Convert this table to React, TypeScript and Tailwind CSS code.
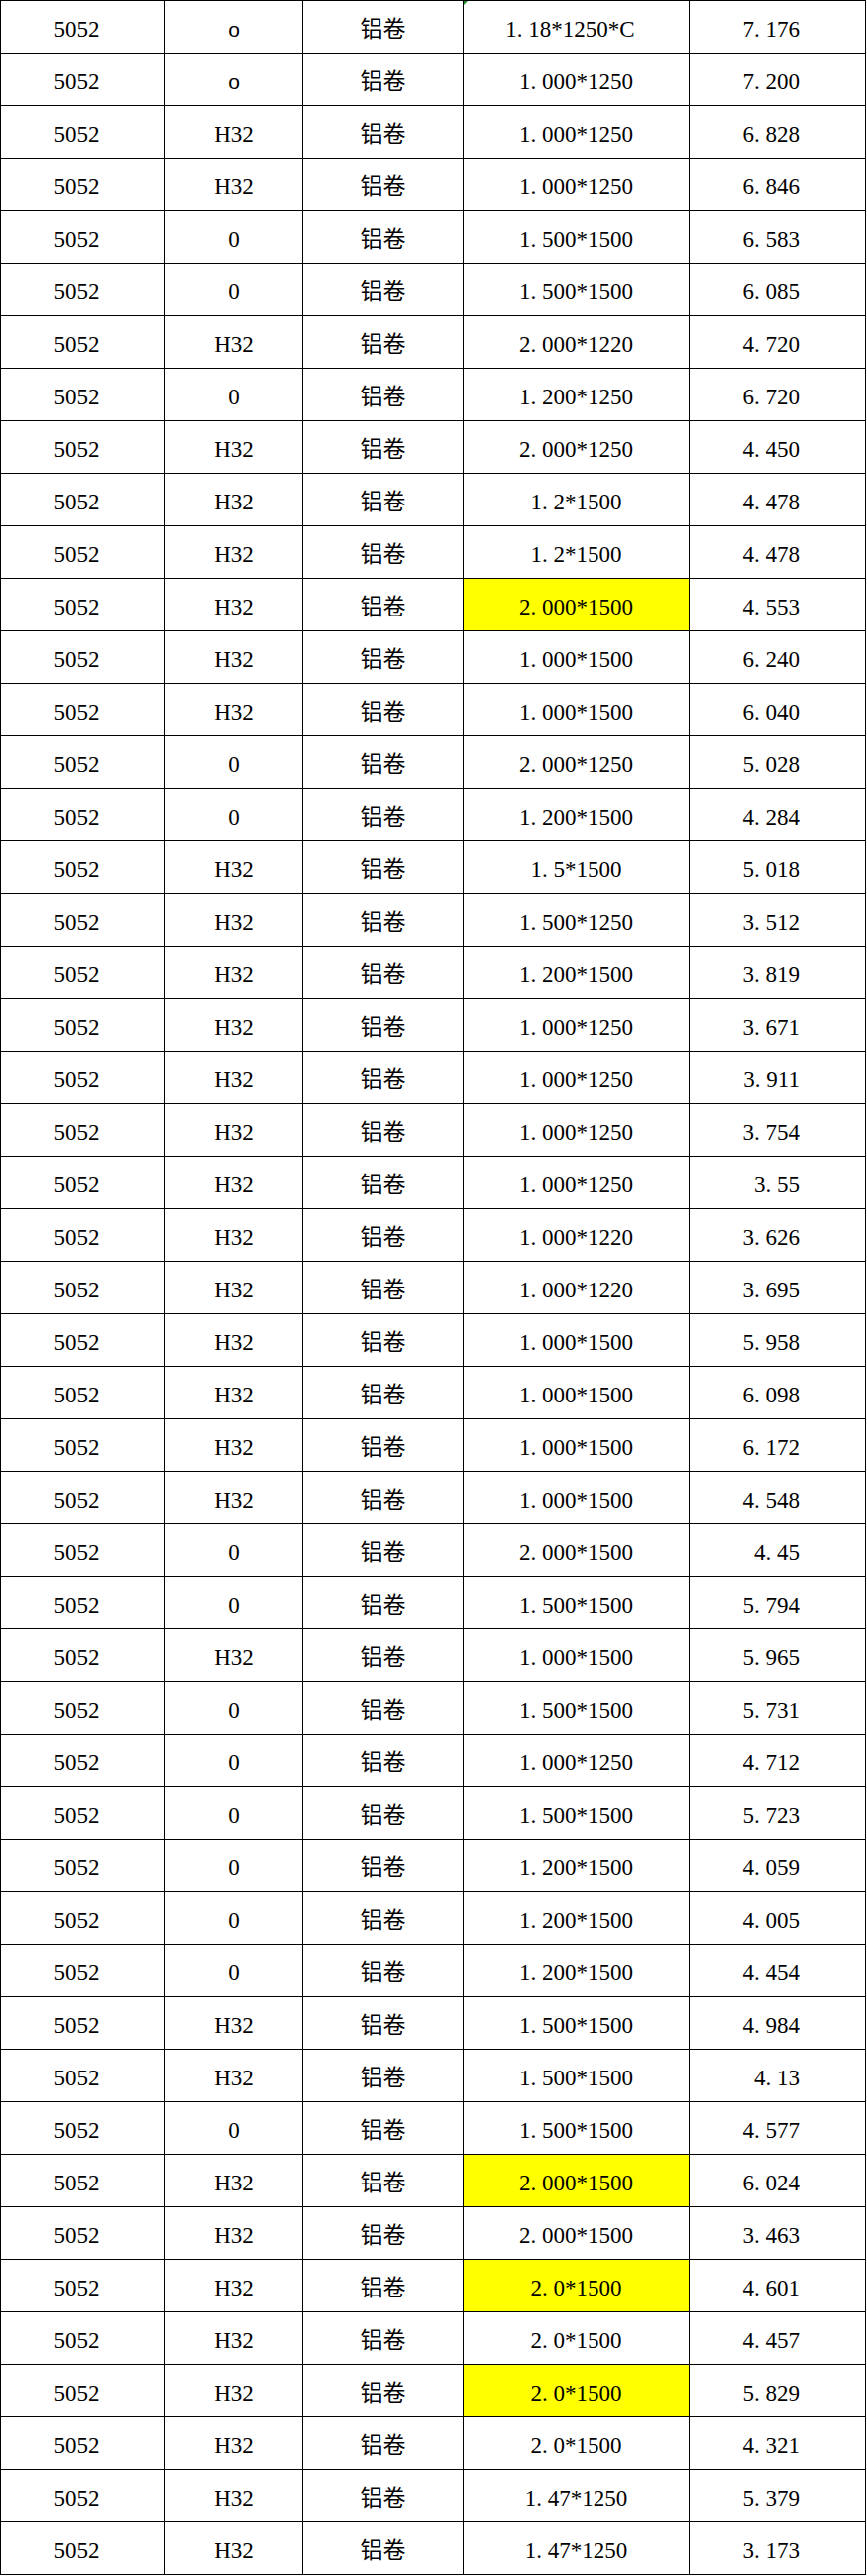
import React from "react";

type Row = {
  grade: string;
  temper: string;
  spec: string;
  weight: string;
  mark?: boolean;
};

const rows: Row[] = [
  { grade: "5052", temper: "o", spec: "1.18*1250*C", weight: "7.176" },
  { grade: "5052", temper: "o", spec: "1.000*1250", weight: "7.200" },
  { grade: "5052", temper: "H32", spec: "1.000*1250", weight: "6.828" },
  { grade: "5052", temper: "H32", spec: "1.000*1250", weight: "6.846" },
  { grade: "5052", temper: "0", spec: "1.500*1500", weight: "6.583" },
  { grade: "5052", temper: "0", spec: "1.500*1500", weight: "6.085" },
  { grade: "5052", temper: "H32", spec: "2.000*1220", weight: "4.720" },
  { grade: "5052", temper: "0", spec: "1.200*1250", weight: "6.720" },
  { grade: "5052", temper: "H32", spec: "2.000*1250", weight: "4.450" },
  { grade: "5052", temper: "H32", spec: "1.2*1500", weight: "4.478" },
  { grade: "5052", temper: "H32", spec: "1.2*1500", weight: "4.478" },
  { grade: "5052", temper: "H32", spec: "2.000*1500", weight: "4.553", mark: true },
  { grade: "5052", temper: "H32", spec: "1.000*1500", weight: "6.240" },
  { grade: "5052", temper: "H32", spec: "1.000*1500", weight: "6.040" },
  { grade: "5052", temper: "0", spec: "2.000*1250", weight: "5.028" },
  { grade: "5052", temper: "0", spec: "1.200*1500", weight: "4.284" },
  { grade: "5052", temper: "H32", spec: "1.5*1500", weight: "5.018" },
  { grade: "5052", temper: "H32", spec: "1.500*1250", weight: "3.512" },
  { grade: "5052", temper: "H32", spec: "1.200*1500", weight: "3.819" },
  { grade: "5052", temper: "H32", spec: "1.000*1250", weight: "3.671" },
  { grade: "5052", temper: "H32", spec: "1.000*1250", weight: "3.911" },
  { grade: "5052", temper: "H32", spec: "1.000*1250", weight: "3.754" },
  { grade: "5052", temper: "H32", spec: "1.000*1250", weight: "3.55" },
  { grade: "5052", temper: "H32", spec: "1.000*1220", weight: "3.626" },
  { grade: "5052", temper: "H32", spec: "1.000*1220", weight: "3.695" },
  { grade: "5052", temper: "H32", spec: "1.000*1500", weight: "5.958" },
  { grade: "5052", temper: "H32", spec: "1.000*1500", weight: "6.098" },
  { grade: "5052", temper: "H32", spec: "1.000*1500", weight: "6.172" },
  { grade: "5052", temper: "H32", spec: "1.000*1500", weight: "4.548" },
  { grade: "5052", temper: "0", spec: "2.000*1500", weight: "4.45" },
  { grade: "5052", temper: "0", spec: "1.500*1500", weight: "5.794" },
  { grade: "5052", temper: "H32", spec: "1.000*1500", weight: "5.965" },
  { grade: "5052", temper: "0", spec: "1.500*1500", weight: "5.731" },
  { grade: "5052", temper: "0", spec: "1.000*1250", weight: "4.712" },
  { grade: "5052", temper: "0", spec: "1.500*1500", weight: "5.723" },
  { grade: "5052", temper: "0", spec: "1.200*1500", weight: "4.059" },
  { grade: "5052", temper: "0", spec: "1.200*1500", weight: "4.005" },
  { grade: "5052", temper: "0", spec: "1.200*1500", weight: "4.454" },
  { grade: "5052", temper: "H32", spec: "1.500*1500", weight: "4.984" },
  { grade: "5052", temper: "H32", spec: "1.500*1500", weight: "4.13" },
  { grade: "5052", temper: "0", spec: "1.500*1500", weight: "4.577" },
  { grade: "5052", temper: "H32", spec: "2.000*1500", weight: "6.024", mark: true },
  { grade: "5052", temper: "H32", spec: "2.000*1500", weight: "3.463" },
  { grade: "5052", temper: "H32", spec: "2.0*1500", weight: "4.601", mark: true },
  { grade: "5052", temper: "H32", spec: "2.0*1500", weight: "4.457" },
  { grade: "5052", temper: "H32", spec: "2.0*1500", weight: "5.829", mark: true },
  { grade: "5052", temper: "H32", spec: "2.0*1500", weight: "4.321" },
  { grade: "5052", temper: "H32", spec: "1.47*1250", weight: "5.379" },
  { grade: "5052", temper: "H32", spec: "1.47*1250", weight: "3.173" },
];

// the sheet font has a half-width period, so give the dot a wider box
function Num({ value }: { value: string }) {
  const i = value.indexOf(".");
  if (i < 0) return <>{value}</>;
  return (
    <>
      {value.slice(0, i)}
      <span className="inline-block w-[0.5em] text-left">.</span>
      {value.slice(i + 1)}
    </>
  );
}

const cell =
  "h-[53px] border-r border-b border-black flex items-end pb-[11px] leading-[25px] text-black";

export default function App() {
  return (
    <div className="bg-white min-h-[2599px]">
      <div
        className="w-fit border-l border-t border-black text-[23px]"
        style={{ fontFamily: '"Liberation Serif", "Noto Sans CJK SC", serif' }}
      >
        {rows.map((r, idx) => (
          <div
            key={idx}
            className="grid grid-cols-[166px_139px_162px_228px_178px]"
          >
            <div className={`${cell} justify-center pr-[12px]`}>{r.grade}</div>
            <div className={`${cell} justify-center`}>
              {r.temper === "o" ? (
                <span className="font-['Liberation_Sans',sans-serif] text-[21px] font-light">o</span>
              ) : (
                r.temper
              )}
            </div>
            <div className={`${cell} justify-center`}>铝卷</div>
            <div
              className={`${cell} justify-center relative ${
                r.mark ? "bg-[#ffff00]" : ""
              } ${r.spec.endsWith("C") ? "pr-[12px]" : ""}`}
            >
              {idx === 0 && (
                <span className="absolute left-0 top-0 w-0 h-0 border-t-[4px] border-r-[4px] border-t-[#1e8a2e] border-r-transparent" />
              )}
              <Num value={r.spec} />
            </div>
            <div className={`${cell} justify-end pr-[66px]`}>
              <Num value={r.weight} />
            </div>
          </div>
        ))}
      </div>
    </div>
  );
}
